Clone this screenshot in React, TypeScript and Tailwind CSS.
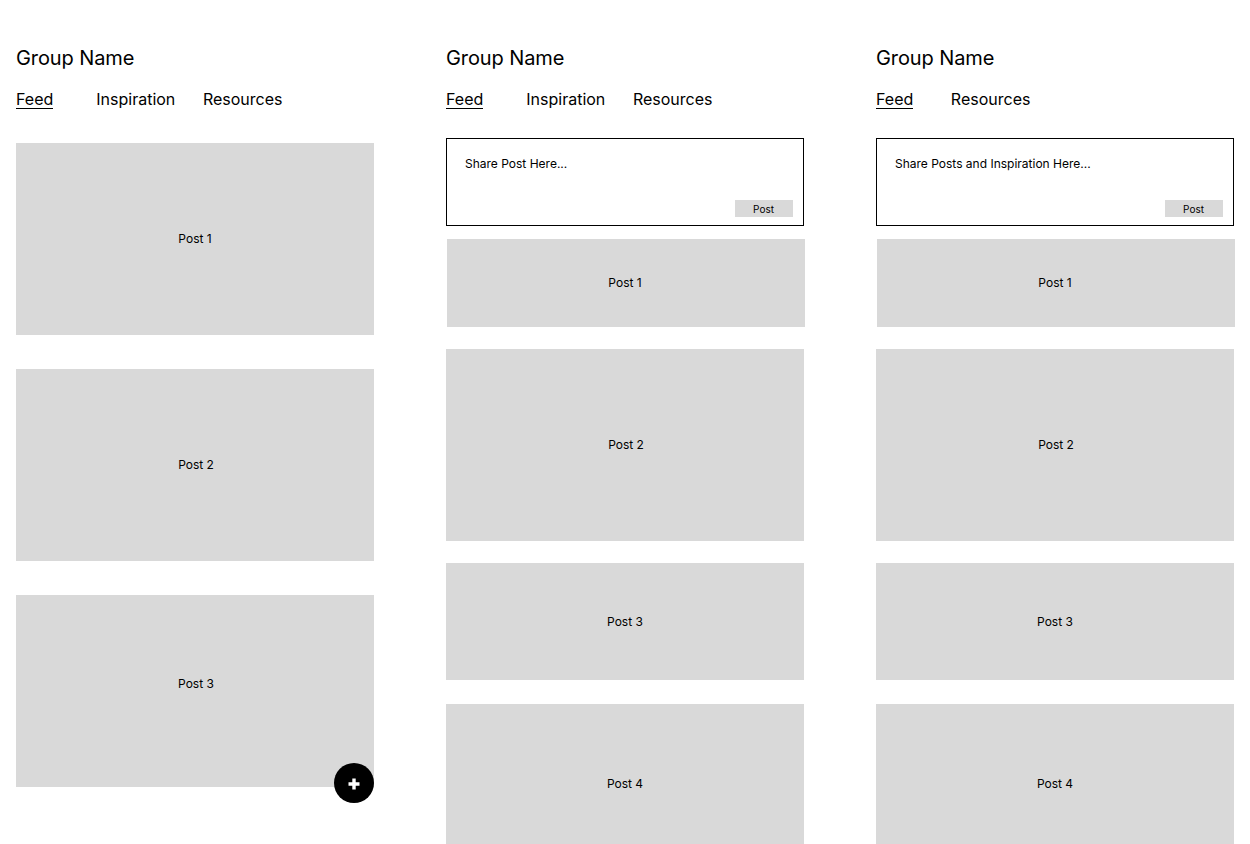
const font = { fontFamily: 'Inter, "Liberation Sans", sans-serif' };

interface PostProps {
  label: string;
  className: string;
  children?: React.ReactNode;
}

function Post({ label, className, children }: PostProps) {
  return (
    <div className={`relative flex w-[358px] shrink-0 items-center justify-center bg-[#d9d9d9] text-[12px] leading-[15px] text-black ${className}`}>
      {label}
      {children}
    </div>
  );
}

function Header({ tabs }: { tabs: { name: string; className: string }[] }) {
  return (
    <>
      <h2 className="shrink-0 pt-[46px] text-[20px] leading-[24px] font-normal tracking-[-0.1px] text-black">Group Name</h2>
      <nav className="mt-[19px] flex h-[24px] shrink-0 items-start text-[16px] leading-[19px] text-black">
        <span className="mt-[1px] border-b border-black leading-[18px]">Feed</span>
        {tabs.map((tab) => (
          <span key={tab.name} className={`mt-[1px] leading-[18px] ${tab.className}`}>
            {tab.name}
          </span>
        ))}
      </nav>
    </>
  );
}

function Composer({ placeholder }: { placeholder: string }) {
  return (
    <div className="flex h-[88px] w-[358px] shrink-0 flex-col border border-black pt-[17px] pr-[10px] pb-[8px] pl-[18px]">
      <p className="text-[12px] leading-[15px] text-black">{placeholder}</p>
      <button className="mt-auto flex h-[17px] w-[58px] items-center justify-center self-end bg-[#d9d9d9] pr-[1px] text-[10px] leading-[12px] text-black">
        Post
      </button>
    </div>
  );
}

function ComposerColumn({ placeholder, tabs }: { placeholder: string; tabs: { name: string; className: string }[] }) {
  return (
    <section className="flex w-[358px] flex-col">
      <Header tabs={tabs} />
      <div className="mt-[25px] flex shrink-0 flex-col">
        <Composer placeholder={placeholder} />
        <Post label="Post 1" className="mt-[13px] ml-px h-[88px] pr-[2px] pb-[2px]" />
        <Post label="Post 2" className="mt-[22px] h-[192px] pb-[2px] pl-[2px]" />
        <Post label="Post 3" className="mt-[22px] h-[117px]" />
        <Post label="Post 4" className="mt-[24px] h-[158px]" />
      </div>
    </section>
  );
}

export default function App() {
  return (
    <div style={font} className="flex h-[844px] w-[1250px] gap-[72px] overflow-hidden bg-white pl-[16px]">
      <section className="flex w-[358px] flex-col">
        <Header
          tabs={[
            { name: 'Inspiration', className: 'ml-[43px]' },
            { name: 'Resources', className: 'ml-[27.6px]' },
          ]}
        />
        <div className="mt-[30px] flex shrink-0 flex-col gap-[34px]">
          <Post label="Post 1" className="h-[192px] pb-[2px]" />
          <Post label="Post 2" className="h-[192px] pb-[2px] pl-[2px]" />
          <Post label="Post 3" className="h-[192px] pb-[16px] pl-[2px]">
            <button className="absolute right-0 -bottom-[16px] flex h-[40px] w-[40px] items-center justify-center rounded-full bg-black pt-[1px]">
              <svg width="12" height="12" viewBox="0 0 12 12" fill="none">
                <path d="M6 .5v11M.5 6h11" stroke="white" strokeWidth="3.4" />
              </svg>
            </button>
          </Post>
        </div>
      </section>

      <ComposerColumn
        placeholder="Share Post Here..."
        tabs={[
          { name: 'Inspiration', className: 'ml-[43px]' },
          { name: 'Resources', className: 'ml-[27.6px]' },
        ]}
      />
      <ComposerColumn
        placeholder="Share Posts and Inspiration Here..."
        tabs={[{ name: 'Resources', className: 'ml-[37.6px]' }]}
      />
    </div>
  );
}
